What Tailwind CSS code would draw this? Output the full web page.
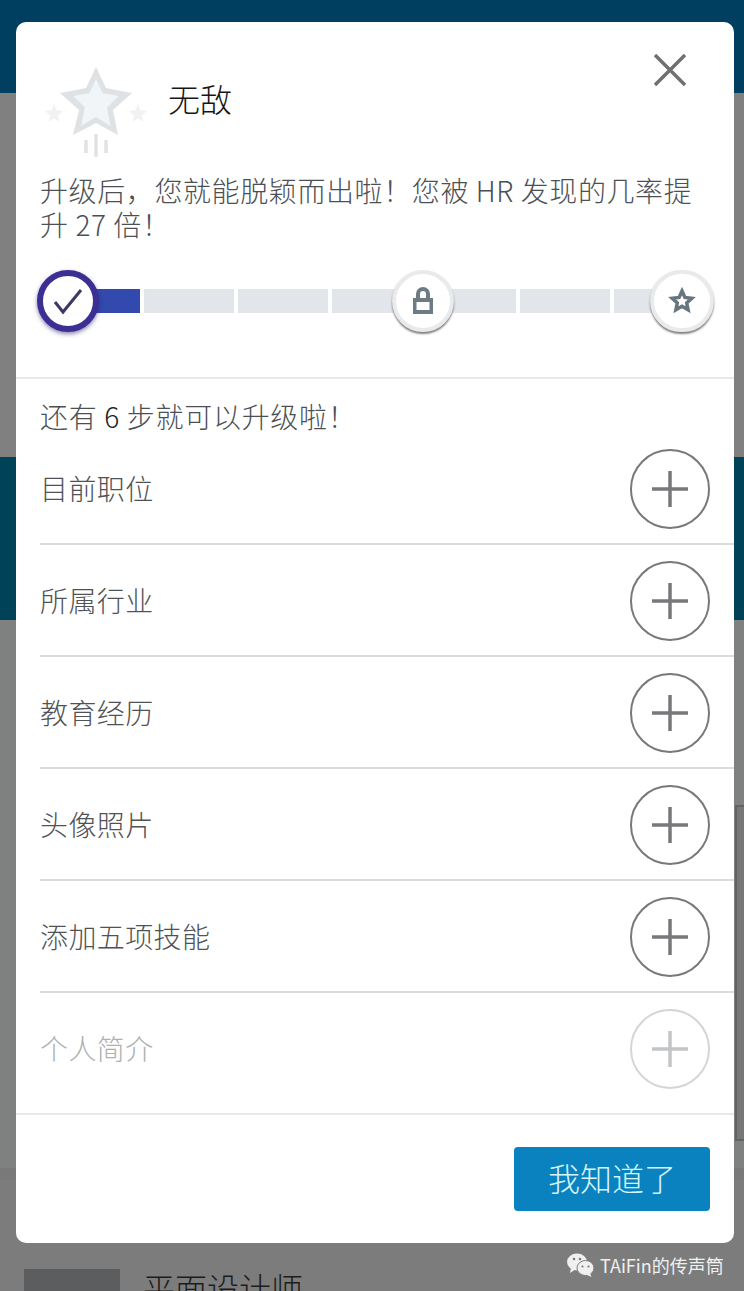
<!DOCTYPE html>
<html lang="zh">
<head>
<meta charset="utf-8">
<script src="https://cdn.jsdelivr.net/npm/@tailwindcss/browser@4"></script>
</head>
<body class="m-0">
<div class="relative w-[744px] h-[1291px] overflow-hidden bg-[#7c7c7d] font-['Noto_Sans_CJK_SC','Noto_Sans',sans-serif]">
  <!-- page behind the overlay -->
  <div class="h-[93px] bg-[#003f5f]"></div>
  <div class="h-[364px] bg-[#808081]"></div>
  <div class="h-[163px] bg-[#004257]"></div>
  <div class="h-[548px] bg-[#7f8080]"></div>
  <div class="h-3 bg-[#79797a]"></div>
  <div class="flex gap-[23px] pl-6 pt-[89px]">
    <div class="w-24 h-24 bg-[#5c5d5e]"></div>
    <div class="-mt-[2px] text-[32px] leading-10 font-light text-[#1c1c1c]">平面设计师</div>
  </div>
  <div class="absolute left-[735px] top-[805px] w-[9px] h-[336px] bg-[#777778] border-l-2 border-y-2 border-[#636364]"></div>

  <!-- modal -->
  <div class="absolute left-4 top-[22px] w-[718px] h-[1221px] bg-white rounded-[10px] flex flex-col">
    <div class="h-[357px] border-b-2 border-[#e8e8e8] shrink-0 px-6">
      <div class="relative h-[170px]">
        <svg class="absolute left-0 top-[43px]" width="112" height="95" viewBox="0 0 112 95">
          <polygon points="56,2 66,23 92,28 73,45 78,70 56,58 33,70 39,45 20,28 46,23" fill="#dfe2e4"/>
          <polygon points="56,14 62.500,28 79,31 67,42.500 70.500,61 56,52 41,61 45,42.500 33,31 49.500,28" fill="#f1f5f7"/>
          <polygon points="14,39 16.500,45 23,46 18,50.500 19.500,57 14,53.500 8.500,57 10,50.500 5,46 11.500,45" fill="#f2f2f2"/>
          <polygon points="98,39 100.500,45 107,46 102,50.500 103.500,57 98,53.500 92.500,57 94,50.500 89,46 95.500,45" fill="#f2f2f2"/>
          <path d="M46 75v13M56 69v23M66 75v13" stroke="#e0e2e4" stroke-width="3.500" fill="none"/>
        </svg>
        <div class="absolute left-[128px] top-[53px] text-[32px] leading-[46px] font-light text-[#161616]">无敌</div>
        <button class="absolute right-6 top-[32px] w-[32px] h-[32px]">
          <svg width="32" height="32" viewBox="0 0 32 32"><path d="M1 1L31 31M31 1L1 31" stroke="#6f7072" stroke-width="3.500" fill="none"/></svg>
        </button>
      </div>
      <p class="mt-[-19px] text-[28px] leading-[34px] tracking-[0.6px] font-light text-[#4c5054] w-[670px]">升级后，您就能脱颖而出啦！您被 HR 发现的几率提升 27 倍！</p>
      <div class="relative mt-[48px] h-6 -mx-6">
        <div class="flex gap-1 pl-[34px] overflow-hidden w-[648px]">
          <div class="w-[90px] h-6 shrink-0 bg-[#3249ad]"></div>
          <div class="w-[90px] h-6 shrink-0 bg-[#e2e6ea]"></div>
          <div class="w-[90px] h-6 shrink-0 bg-[#e2e6ea]"></div>
          <div class="w-[90px] h-6 shrink-0 bg-[#e2e6ea]"></div>
          <div class="w-[90px] h-6 shrink-0 bg-[#e2e6ea]"></div>
          <div class="w-[90px] h-6 shrink-0 bg-[#e2e6ea]"></div>
          <div class="w-[90px] h-6 shrink-0 bg-[#e2e6ea]"></div>
        </div>
        <div class="absolute left-[21px] top-[-19px] w-[62px] h-[62px] rounded-full bg-white border-[6px] border-[#3c2f93] shadow-[0_2px_4px_rgba(40,30,110,0.55)] flex items-center justify-center">
          <svg width="30" height="28" viewBox="0 0 30 28"><path d="M2 15L10 25L28 3" stroke="#3a3a66" stroke-width="3" fill="none"/></svg>
        </div>
        <div class="absolute left-[376px] top-[-19px] w-[62px] h-[62px] rounded-full bg-white border-[4px] border-[#e8eaec] shadow-[0_2px_2px_rgba(0,0,0,0.5)] flex items-center justify-center">
          <svg width="22" height="28" viewBox="0 0 22 28"><path d="M6 12V7a5 5 0 0 1 10 0v5" stroke="#6d7b84" stroke-width="4" fill="none"/><path fill-rule="evenodd" d="M1 11h20v16H1zM4.500 15v8h13v-8z" fill="#6d7b84"/></svg>
        </div>
        <div class="absolute left-[634px] top-[-19px] w-[64px] h-[62px] rounded-full bg-white border-[4px] border-[#e8eaec] shadow-[0_2px_2px_rgba(0,0,0,0.5)] flex items-center justify-center">
          <svg width="28" height="28" viewBox="0 0 28 28"><path fill="#fff" stroke="#66757f" stroke-width="3.500" stroke-linejoin="miter" d="M14 4l2.900 6.400 6.900.8-5.100 4.700 1.400 6.900-6.100-3.500-6.100 3.500 1.400-6.900-5.100-4.700 6.900-.8z"/></svg>
        </div>
      </div>
    </div>

    <div class="flex-1 pl-6">
      <div class="pt-[17px] text-[28px] leading-10 tracking-[0.7px] font-light h-[54px] text-[#4c5054]">还有 <span class="text-[#222]">6</span> 步就可以升级啦！</div>
      <div class="flex items-center justify-between h-[112px] border-b-2 border-[#dcdcdc] pr-6 text-[28px] tracking-[0.4px] font-light text-[#4f5256]">
        <span>目前职位</span>
        <span class="mt-[2px] w-20 h-20 rounded-full border-2 border-[#77787a] flex items-center justify-center"><svg width="36" height="36" viewBox="0 0 36 36"><path d="M0 18H36M18 0V36" stroke="#77787a" stroke-width="3.500"/></svg></span>
      </div>
      <div class="flex items-center justify-between h-[112px] border-b-2 border-[#dcdcdc] pr-6 text-[28px] tracking-[0.4px] font-light text-[#4f5256]">
        <span>所属行业</span>
        <span class="mt-[2px] w-20 h-20 rounded-full border-2 border-[#77787a] flex items-center justify-center"><svg width="36" height="36" viewBox="0 0 36 36"><path d="M0 18H36M18 0V36" stroke="#77787a" stroke-width="3.500"/></svg></span>
      </div>
      <div class="flex items-center justify-between h-[112px] border-b-2 border-[#dcdcdc] pr-6 text-[28px] tracking-[0.4px] font-light text-[#4f5256]">
        <span>教育经历</span>
        <span class="mt-[2px] w-20 h-20 rounded-full border-2 border-[#77787a] flex items-center justify-center"><svg width="36" height="36" viewBox="0 0 36 36"><path d="M0 18H36M18 0V36" stroke="#77787a" stroke-width="3.500"/></svg></span>
      </div>
      <div class="flex items-center justify-between h-[112px] border-b-2 border-[#dcdcdc] pr-6 text-[28px] tracking-[0.4px] font-light text-[#4f5256]">
        <span>头像照片</span>
        <span class="mt-[2px] w-20 h-20 rounded-full border-2 border-[#77787a] flex items-center justify-center"><svg width="36" height="36" viewBox="0 0 36 36"><path d="M0 18H36M18 0V36" stroke="#77787a" stroke-width="3.500"/></svg></span>
      </div>
      <div class="flex items-center justify-between h-[112px] border-b-2 border-[#dcdcdc] pr-6 text-[28px] tracking-[0.4px] font-light text-[#4f5256]">
        <span>添加五项技能</span>
        <span class="mt-[2px] w-20 h-20 rounded-full border-2 border-[#77787a] flex items-center justify-center"><svg width="36" height="36" viewBox="0 0 36 36"><path d="M0 18H36M18 0V36" stroke="#77787a" stroke-width="3.500"/></svg></span>
      </div>
      <div class="flex items-center justify-between h-[112px] pr-6 text-[28px] tracking-[0.4px] font-light text-[#aeb0b2]">
        <span class="-mt-[2px]">个人简介</span>
        <span class="w-20 h-20 rounded-full border-2 border-[#d4d5d6] flex items-center justify-center"><svg width="36" height="36" viewBox="0 0 36 36"><path d="M0 18H36M18 0V36" stroke="#c4c5c7" stroke-width="3.500"/></svg></span>
      </div>
    </div>

    <div class="h-[130px] shrink-0 border-t-2 border-[#e8e8e8] flex justify-end pt-8 pr-6">
      <button class="w-[196px] h-16 pb-1 rounded bg-[#0a82c0] text-[32px] font-light text-[#d6f6fa]">我知道了</button>
    </div>
  </div>

  <!-- watermark -->
  <div class="absolute left-[567px] top-[1252px] flex items-center gap-[6px]">
    <svg width="27" height="26" viewBox="0 0 27 26">
      <ellipse cx="10" cy="10" rx="10" ry="8.500" fill="#f0f0f0"/>
      <path d="M4 16L3 21L9 17z" fill="#f0f0f0"/>
      <ellipse cx="18.500" cy="16" rx="8.500" ry="7.500" fill="#f0f0f0" stroke="#7c7c7d"/>
      <path d="M23 21L24.500 25L19 22.500z" fill="#f0f0f0"/>
      <circle cx="7" cy="7" r="1.300" fill="#7c7c7d"/><circle cx="13" cy="7" r="1.300" fill="#7c7c7d"/>
      <circle cx="15.500" cy="14.500" r="1.100" fill="#7c7c7d"/><circle cx="21.500" cy="14.500" r="1.100" fill="#7c7c7d"/>
    </svg>
    <span class="text-[18px] leading-6 text-[#f0f0f0]">TAiFin的传声筒</span>
  </div>
</div>
</body>
</html>
